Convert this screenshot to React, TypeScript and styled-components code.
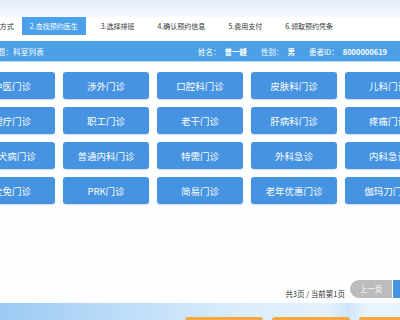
import React from "react";
import styled, { createGlobalStyle } from "styled-components";

const Global = createGlobalStyle`
  html, body { margin: 0; padding: 0; background: #fdfeff; }
  body { width: 400px; height: 320px; overflow: hidden; font-family: "Noto Sans CJK SC", "Noto Sans", sans-serif; }
`;

const Page = styled.div`
  width: 400px;
  height: 320px;
  overflow: hidden;
  display: flex;
  flex-direction: column;
  background: #fdfeff;
`;

const TopStrip = styled.div`
  height: 17px;
  flex: none;
  background: linear-gradient(180deg, #e1edf8 0%, #edf4fb 60%, #f6f9fd 100%);
`;

const TabBar = styled.div`
  height: 24px;
  flex: none;
  background: #ffffff;
  display: flex;
  align-items: flex-start;
  overflow: hidden;
`;

const TabList = styled.div`
  display: flex;
  gap: 7px;
  margin-left: -42px;
  white-space: nowrap;
`;

const Tab = styled.div<{ $active?: boolean }>`
  height: 18px;
  line-height: 18px;
  padding: 0 8px;
  font-size: 7px;
  color: ${(p) => (p.$active ? "#ffffff" : "#333333")};
  background: ${(p) => (p.$active ? "#4ba2ea" : "transparent")};
  &:first-child { margin-right: -7px; }
`;

const InfoBar = styled.div`
  height: 20px;
  flex: none;
  background: #4b9fe7;
  border-bottom: 1px solid #b9dbf6;
  display: flex;
  align-items: center;
  justify-content: space-between;
  padding-right: 13px;
  color: #ffffff;
  font-size: 7.5px;
  white-space: nowrap;
  overflow: hidden;
`;

const Title = styled.span`
  margin-left: -10px;
  letter-spacing: 0.2px;
`;

const Patient = styled.div`
  display: flex;
  gap: 14px;
`;

const Strong = styled.b`
  font-weight: 700;
  margin-left: 4px;
`;

const Grid = styled.div`
  margin-top: 10px;
  margin-left: -31px;
  display: grid;
  grid-template-columns: repeat(5, 86px);
  grid-auto-rows: 27px;
  column-gap: 8px;
  row-gap: 8px;
`;

const DeptButton = styled.div`
  background: #4593e1;
  border-radius: 3px;
  box-shadow: 0 1px 1px rgba(40, 90, 150, 0.2);
  color: #ffffff;
  font-size: 9.5px;
  display: flex;
  align-items: center;
  justify-content: center;
  white-space: nowrap;
`;

const Pager = styled.div`
  margin-top: 76px;
  height: 18px;
  display: flex;
  justify-content: flex-end;
  align-items: center;
  margin-right: -33px;
  flex: none;
`;

const PageInfo = styled.span`
  font-size: 7.5px;
  color: #333333;
  margin-right: 5px;
  margin-top: 8px;
`;

const PageButton = styled.div<{ $kind: "prev" | "next" }>`
  width: ${(p) => (p.$kind === "prev" ? "42px" : "40px")};
  height: 18px;
  line-height: 18px;
  text-align: center;
  font-size: 7.5px;
  color: #ffffff;
  background: ${(p) => (p.$kind === "prev" ? "#bcbcbc" : "#4593e1")};
  border-radius: ${(p) => (p.$kind === "prev" ? "9px 0 0 9px" : "0 9px 9px 0")};
  margin-left: ${(p) => (p.$kind === "next" ? "1px" : "0")};
`;

const BottomStrip = styled.div`
  margin-top: 5px;
  height: 17px;
  flex: none;
  overflow: hidden;
  background: linear-gradient(90deg, #9ccaf3 0%, #bcdcf8 30%, #dbedfb 60%, #e4f1fc 82%, #cfe6fa 87%, #eaf4fd 92%, #e8f3fc 100%);
  display: flex;
  gap: 9px;
  padding-left: 185px;
`;

const ActionButton = styled.div`
  margin-top: 14px;
  width: 78px;
  height: 20px;
  flex: none;
  border-radius: 3px;
  background: #f5a843;
`;

const tabs = ["1.选择预约方式", "2.查找预约医生", "3.选择排班", "4.确认预约信息", "5.费用支付", "6.领取预约凭条"];

const depts = [
  "中医门诊", "涉外门诊", "口腔科门诊", "皮肤科门诊", "儿科门诊",
  "理疗门诊", "职工门诊", "老干门诊", "肝病科门诊", "疼痛门诊",
  "狂犬病门诊", "普通内科门诊", "特需门诊", "外科急诊", "内科急诊",
  "全免门诊", "PRK门诊", "简易门诊", "老年优惠门诊", "伽玛刀门诊",
];

export default function App() {
  return (
    <Page>
      <Global />
      <TopStrip />
      <TabBar>
        <TabList>
          {tabs.map((t, i) => (
            <Tab key={t} $active={i === 1}>{t}</Tab>
          ))}
        </TabList>
      </TabBar>
      <InfoBar>
        <Title>标题：科室列表</Title>
        <Patient>
          <span>姓名：<Strong>曾一峰</Strong></span>
          <span>性别：<Strong>男</Strong></span>
          <span>患者ID：<Strong>8000000619</Strong></span>
        </Patient>
      </InfoBar>
      <Grid>
        {depts.map((d) => (
          <DeptButton key={d}>{d}</DeptButton>
        ))}
      </Grid>
      <Pager>
        <PageInfo>共3页 / 当前第1页</PageInfo>
        <PageButton $kind="prev">上一页</PageButton>
        <PageButton $kind="next">下一页</PageButton>
      </Pager>
      <BottomStrip>
        <ActionButton />
        <ActionButton />
        <ActionButton />
      </BottomStrip>
    </Page>
  );
}
